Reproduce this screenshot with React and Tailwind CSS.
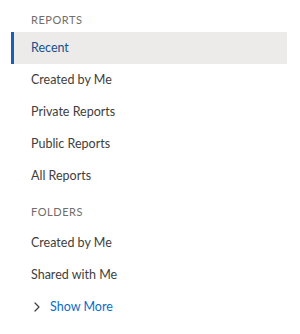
import React from "react";

const reports = ["Recent", "Created by Me", "Private Reports", "Public Reports", "All Reports"];
const folders = ["Created by Me", "Shared with Me"];

const Item = ({ label, active }) => (
  <li
    className={
      "h-8 flex items-center pl-[17px] text-[12.5px] border-l-[3px] " +
      (active ? "bg-[#ecebea] border-[#1b5fb4] text-[#16508e]" : "border-transparent text-[#3e3e3c]")
    }
  >
    {label}
  </li>
);

export default function App() {
  return (
    <div className="w-[300px] h-[334px] bg-white pl-[11px] pr-[13px] pt-[12px]" style={{ fontFamily: "Lato, 'Open Sans', sans-serif" }}>
      <div className="pl-[20px] text-[11px] tracking-[0.05em] text-[#706e6b] h-4 flex items-center mb-[4px]">REPORTS</div>
      <ul>
        {reports.map((r, i) => (
          <Item key={r} label={r} active={i === 0} />
        ))}
      </ul>
      <div className="pl-[20px] text-[11px] tracking-[0.05em] text-[#706e6b] h-4 flex items-center mt-[12px] mb-[7px]">FOLDERS</div>
      <ul>
        {folders.map((f) => (
          <Item key={f} label={f} />
        ))}
      </ul>
      <button className="h-8 flex items-center pl-[22px] text-[12.5px] text-[#0b6bcb] gap-[9px]">
        <svg width="8" height="10" viewBox="0 0 8 10" fill="none">
          <path d="M2 1l4 4-4 4" stroke="#3e3e3c" strokeWidth="1.2" strokeLinecap="round" strokeLinejoin="round" />
        </svg>
        Show More
      </button>
    </div>
  );
}
